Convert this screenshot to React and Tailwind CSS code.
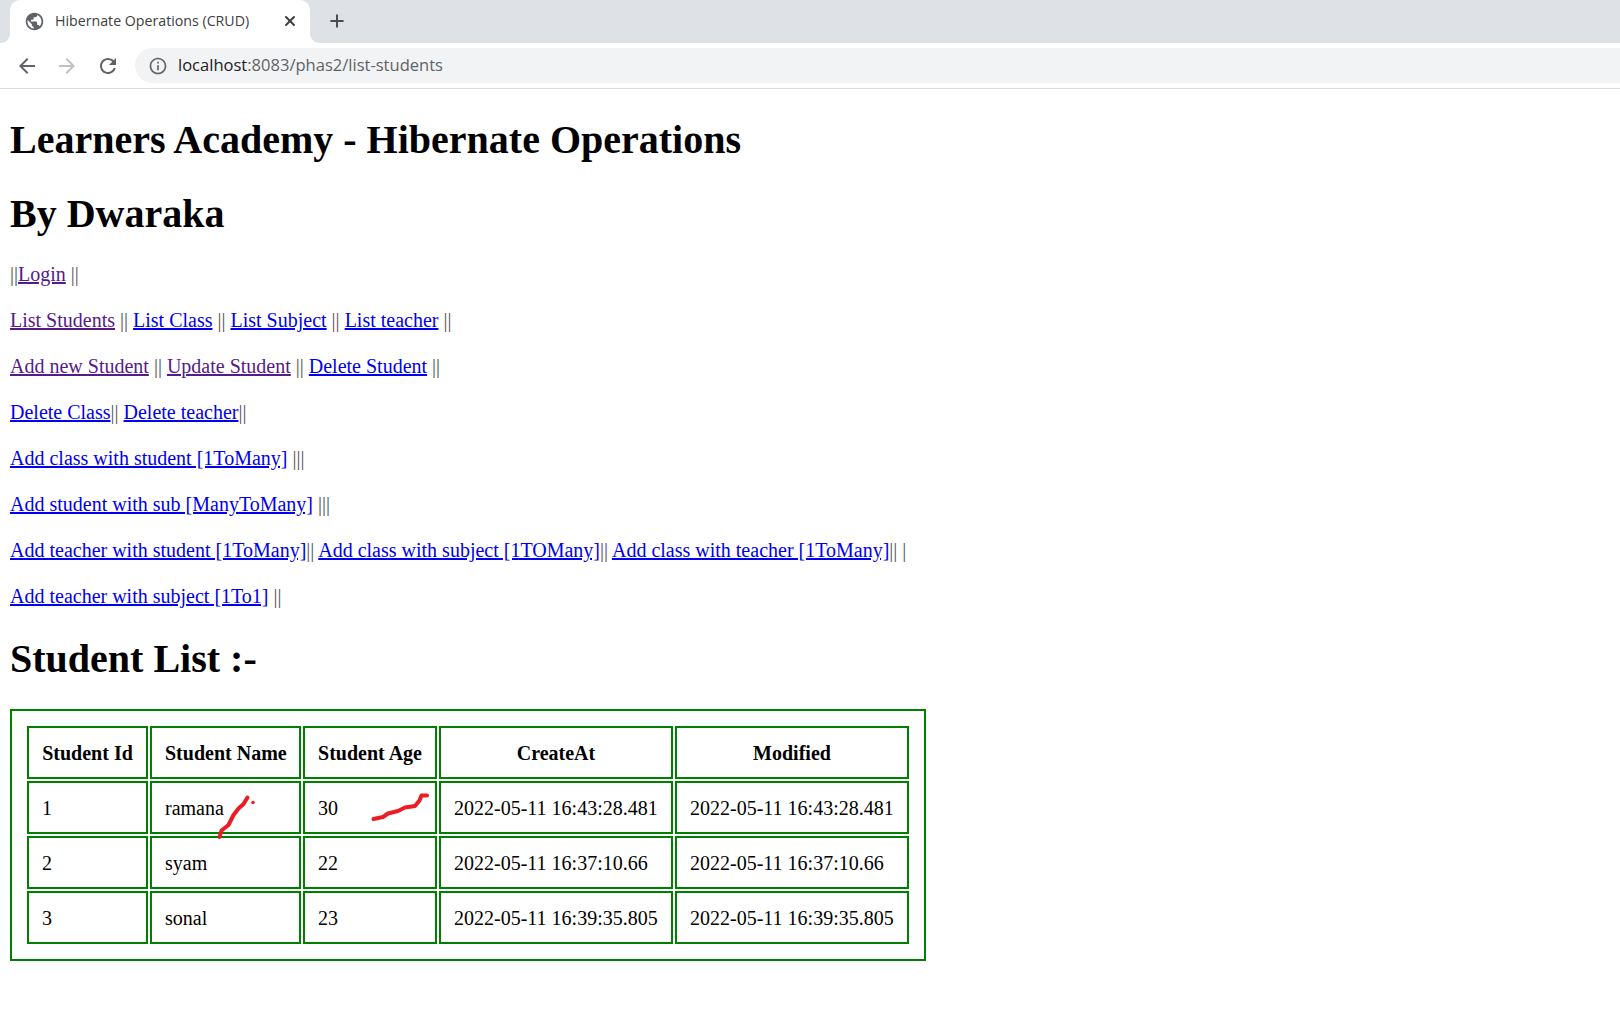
import { X, Plus } from 'lucide-react'

const VISITED = 'text-[#551a8b] underline'
const LINK = 'text-[#0000ee] underline'

const NAV_ROWS = [
  [['', '||'], ['Login', '', true], ['', ' ||']],
  [['List Students', '', true], ['', ' || '], ['List Class'], ['', ' || '], ['List Subject'], ['', ' || '], ['List teacher'], ['', ' ||']],
  [['Add new Student', '', true], ['', ' || '], ['Update Student', '', true], ['', ' || '], ['Delete Student'], ['', ' ||']],
  [['Delete Class'], ['', '|| '], ['Delete teacher'], ['', '||']],
  [['Add class with student [1ToMany]'], ['', ' |||']],
  [['Add student with sub [ManyToMany]'], ['', ' |||']],
  [['Add teacher with student [1ToMany]'], ['', '|| '], ['Add class with subject [1TOMany]'], ['', '|| '], ['Add class with teacher [1ToMany]'], ['', '|| |']],
  [['Add teacher with subject [1To1]'], ['', ' ||']],
]

const STUDENTS = [
  ['1', 'ramana', '30', '2022-05-11 16:43:28.481', '2022-05-11 16:43:28.481'],
  ['2', 'syam', '22', '2022-05-11 16:37:10.66', '2022-05-11 16:37:10.66'],
  ['3', 'sonal', '23', '2022-05-11 16:39:35.805', '2022-05-11 16:39:35.805'],
]

function Icon({ d, className }) {
  return (
    <svg viewBox="0 0 24 24" className={className} fill="currentColor">
      <path d={d} />
    </svg>
  )
}

function BrowserChrome() {
  return (
    <div className="font-['Open_Sans',sans-serif]">
      <div className="h-[43px] bg-[#dee1e6] flex items-end pl-[10px]">
        <div className="relative w-[300px] h-[43px] bg-white rounded-t-[10px] flex items-center pl-[14px] pr-[12px] pb-[1px]">
          <svg viewBox="0 0 10 10" className="absolute -left-[10px] bottom-0 w-[10px] h-[10px]">
            <path d="M10 0V10H0C6 10 10 6 10 0Z" fill="#fff" />
          </svg>
          <svg viewBox="0 0 10 10" className="absolute -right-[10px] bottom-0 w-[10px] h-[10px]">
            <path d="M0 0V10H10C4 10 0 6 0 0Z" fill="#fff" />
          </svg>
          <Icon
            className="w-[21px] h-[21px] text-[#5f6368] shrink-0"
            d="M12 2C6.48 2 2 6.48 2 12s4.48 10 10 10 10-4.48 10-10S17.52 2 12 2zm-1 17.93c-3.95-.49-7-3.85-7-7.93 0-.62.08-1.21.21-1.79L9 15v1c0 1.1.9 2 2 2v1.93zm6.9-2.54c-.26-.81-1-1.39-1.9-1.39h-1v-3c0-.55-.45-1-1-1H8v-2h2c.55 0 1-.45 1-1V7h2c1.1 0 2-.9 2-2v-.41c2.93 1.19 5 4.06 5 7.41 0 2.08-.8 3.97-2.1 5.39z"
          />
          <span className="ml-[10px] text-[14.2px] text-[#3c4043] whitespace-nowrap flex-1">Hibernate Operations (CRUD)</span>
          <X className="w-[16px] h-[16px] text-[#3c4043]" strokeWidth={3} />
        </div>
        <Plus className="ml-[17px] mb-[12px] w-[20px] h-[20px] text-[#4a4d51]" strokeWidth={2.4} />
      </div>
      <div className="h-[46px] bg-white border-b border-[#dadce0] flex items-center pl-[15px]">
        <Icon className="w-[24px] h-[24px] text-[#5f6368]" d="M20 11H7.83l5.59-5.59L12 4l-8 8 8 8 1.41-1.41L7.83 13H20v-2z" />
        <Icon className="ml-[16px] w-[24px] h-[24px] text-[#bdc1c6]" d="M12 4l-1.41 1.41L16.17 11H4v2h12.17l-5.58 5.59L12 20l8-8z" />
        <Icon className="ml-[17px] w-[24px] h-[24px] text-[#5f6368]" d="M17.65 6.35C16.2 4.9 14.21 4 12 4c-4.42 0-7.99 3.58-7.99 8s3.57 8 7.99 8c3.73 0 6.84-2.55 7.73-6h-2.08c-.82 2.33-3.04 4-5.65 4-3.31 0-6-2.69-6-6s2.69-6 6-6c1.66 0 3.14.69 4.22 1.78L13 11h7V4l-2.35 2.35z" />
        <div className="ml-[15px] flex-1 h-[35px] bg-[#f1f3f4] rounded-l-full flex items-center pl-[13px]">
          <Icon className="w-[20px] h-[20px] text-[#5f6368]" d="M11 7h2v2h-2zm0 4h2v6h-2zm1-9C6.48 2 2 6.48 2 12s4.48 10 10 10 10-4.48 10-10S17.52 2 12 2zm0 18c-4.41 0-8-3.59-8-8s3.59-8 8-8 8 3.59 8 8-3.59 8-8 8z" />
          <span className="ml-[10px] text-[16.55px] text-[#5f6368] whitespace-nowrap">
            <span className="text-[#202124]">localhost</span>:8083/phas2/list-students
          </span>
        </div>
      </div>
    </div>
  )
}

function StudentTable() {
  const cell = 'border-2 border-[#008000] h-[53px] px-[13px] py-0 text-[20px]'
  return (
    <div className="relative w-[916px] border-2 border-[#008000] p-[13px]">
      <table className="border-separate border-spacing-[2px] table-fixed w-[886px]">
        <colgroup>
          <col className="w-[121px]" />
          <col className="w-[151px]" />
          <col className="w-[134px]" />
          <col className="w-[234px]" />
          <col className="w-[234px]" />
        </colgroup>
        <thead>
          <tr>
            {['Student Id', 'Student Name', 'Student Age', 'CreateAt', 'Modified'].map((h) => (
              <th key={h} className={`${cell} font-bold text-center whitespace-nowrap`}>{h}</th>
            ))}
          </tr>
        </thead>
        <tbody>
          {STUDENTS.map((row) => (
            <tr key={row[0]}>
              {row.map((v, i) => (
                <td key={i} className={`${cell} whitespace-nowrap`}>{v}</td>
              ))}
            </tr>
          ))}
        </tbody>
      </table>
      {/* red marker scribbles drawn over the table */}
      <svg className="absolute -left-[2px] -top-[2px] w-[916px] h-[252px] pointer-events-none" viewBox="0 0 916 252" fill="none">
        <path
          d="M209.5 128L211.5 121.5L218.5 116L223.5 106L228.5 99.5L233.5 95L237.5 88.5"
          stroke="#ed1c24"
          strokeWidth="4"
          strokeLinecap="round"
          strokeLinejoin="round"
        />
        <circle cx="243" cy="93.5" r="1.8" fill="#ed1c24" />
        <path
          d="M363.5 110L373 108L378 104.5L388 102L395 98.5L405 97L409.5 91.5L411.5 86.5L417 86.5"
          stroke="#ed1c24"
          strokeWidth="4"
          strokeLinecap="round"
          strokeLinejoin="round"
        />
      </svg>
    </div>
  )
}

export default function App() {
  return (
    <div className="min-h-screen bg-white text-black">
      <BrowserChrome />
      <main className="px-[10px] font-['Liberation_Serif',serif]">
        <h1 className="mt-[28px] text-[40px] leading-[46px] font-bold">Learners Academy - Hibernate Operations</h1>
        <h1 className="mt-[28px] text-[40px] leading-[46px] font-bold">By Dwaraka</h1>
        <div className="mt-[24px] flex flex-col gap-[20px] text-[20px] leading-[26px]">
          {NAV_ROWS.map((parts, i) => (
            <p key={i} className="whitespace-pre">
              {parts.map(([label, sep, visited], j) =>
                label ? (
                  <a key={j} href="#" className={visited ? VISITED : LINK}>{label}</a>
                ) : (
                  <span key={j} className="text-[#555555]">{sep}</span>
                )
              )}
            </p>
          ))}
        </div>
        <h2 className="mt-[27px] text-[40px] leading-[46px] font-bold">Student List :-</h2>
        <div className="mt-[27px]">
          <StudentTable />
        </div>
      </main>
    </div>
  )
}
